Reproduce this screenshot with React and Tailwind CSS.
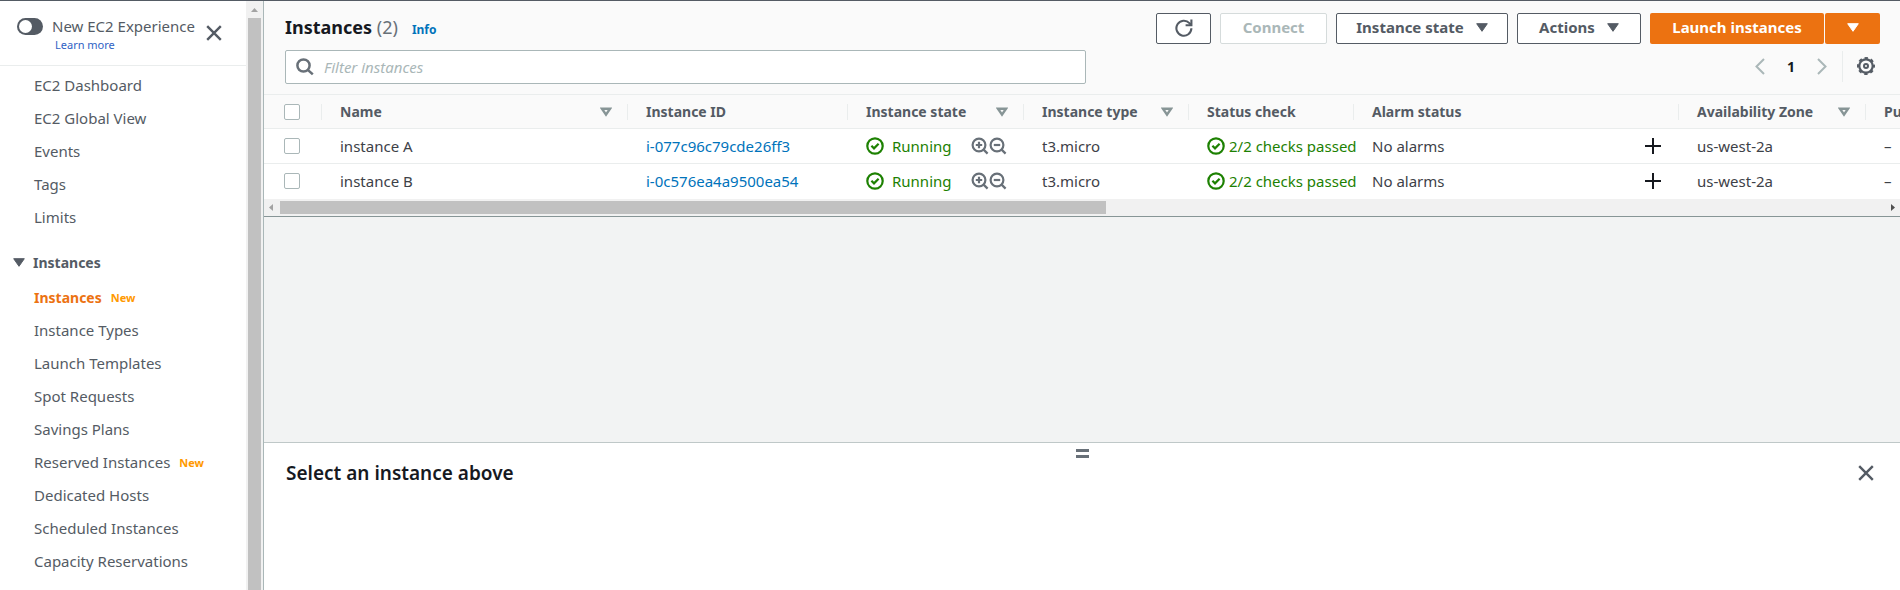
import React, { useState } from 'react';

const overviewLinks = ['EC2 Dashboard', 'EC2 Global View', 'Events', 'Tags', 'Limits'];

const instanceLinks = [
  { label: 'Instances', isNew: true, active: true },
  { label: 'Instance Types' },
  { label: 'Launch Templates' },
  { label: 'Spot Requests' },
  { label: 'Savings Plans' },
  { label: 'Reserved Instances', isNew: true },
  { label: 'Dedicated Hosts' },
  { label: 'Scheduled Instances' },
  { label: 'Capacity Reservations' },
];

const columns = [
  { label: 'Name', sortable: true, width: 'w-[306px]' },
  { label: 'Instance ID', width: 'w-[220px]' },
  { label: 'Instance state', sortable: true, width: 'w-[176px]' },
  { label: 'Instance type', sortable: true, width: 'w-[165px]' },
  { label: 'Status check', width: 'w-[165px]' },
  { label: 'Alarm status', width: 'w-[325px]' },
  { label: 'Availability Zone', sortable: true, width: 'w-[187px]' },
  { label: 'Public IPv4 DNS', width: 'w-[240px]' },
];

const instances = [
  { name: 'instance A', id: 'i-077c96c79cde26ff3' },
  { name: 'instance B', id: 'i-0c576ea4a9500ea54' },
];

function CloseIcon({ className }) {
  return (
    <svg viewBox="0 0 16 16" className={className} fill="none" stroke="currentColor" strokeWidth="2.4" aria-hidden="true">
      <path d="M1.2 1.2l13.6 13.6M14.8 1.2L1.2 14.8" />
    </svg>
  );
}

function Caret() {
  return (
    <svg viewBox="0 0 12 9" className="h-[9px] w-[12px] shrink-0" fill="currentColor" stroke="currentColor" strokeLinejoin="round" aria-hidden="true">
      <path d="M.7.7h10.6L6 8.3z" />
    </svg>
  );
}

function SortIcon() {
  return (
    <svg viewBox="0 0 12 10" className="h-[10px] w-[12px] shrink-0 text-[#879596]" fill="none" stroke="currentColor" strokeWidth="2.4" aria-hidden="true">
      <path d="M2 1.7h8L6 7.6z" />
    </svg>
  );
}

function SearchIcon() {
  return (
    <svg viewBox="0 0 18 18" className="h-[18px] w-[18px] shrink-0 text-[#687078]" fill="none" stroke="currentColor" strokeWidth="2.5" aria-hidden="true">
      <circle cx="7.5" cy="7.5" r="6.1" />
      <path d="M11.8 11.8l5 4.6" />
    </svg>
  );
}

function ZoomIcon({ plus }) {
  return (
    <svg viewBox="0 0 18 18" className="h-[18px] w-[18px]" fill="none" stroke="currentColor" strokeWidth="2.2" aria-hidden="true">
      <circle cx="8" cy="8" r="6.4" />
      <path d="M12.6 12.6l4 4" />
      <path d={plus ? 'M4.8 8h6.4M8 4.8v6.4' : 'M4.8 8h6.4'} />
    </svg>
  );
}

function CheckCircle() {
  return (
    <svg viewBox="0 0 18 18" className="h-[18px] w-[18px] shrink-0" fill="none" stroke="currentColor" strokeWidth="2.2" aria-hidden="true">
      <circle cx="9" cy="9" r="7.7" />
      <path d="M5.4 8.8l2.6 2.6 4.6-4.6" />
    </svg>
  );
}

function RefreshIcon() {
  return (
    <svg viewBox="0 0 18 18" className="h-[18px] w-[18px]" fill="none" stroke="currentColor" strokeWidth="2.1" aria-hidden="true">
      <path d="M16.4 9.3a7.5 7.5 0 1 1-2-5.2l1.6 1.7" />
      <path d="M16.4.6v5.6h-5.8" />
    </svg>
  );
}

function GearIcon() {
  return (
    <svg viewBox="0 0 18 18" className="h-[18px] w-[18px]" fill="none" stroke="currentColor" strokeLinejoin="round" aria-hidden="true">
      <circle cx="9" cy="9" r="6.7" strokeWidth="2.2" />
      <circle cx="9" cy="9" r="8" strokeWidth="2" strokeDasharray="3.4 2.883" strokeDashoffset="1.7" />
      <circle cx="9" cy="9" r="2" strokeWidth="2" />
    </svg>
  );
}

function Chevron({ right }) {
  return (
    <svg viewBox="0 0 10 17" className="h-[17px] w-[10px]" fill="none" stroke="currentColor" strokeWidth="2" aria-hidden="true">
      <path d={right ? 'M1 1l7.5 7.5L1 16' : 'M9 1L1.5 8.5 9 16'} />
    </svg>
  );
}

function Checkbox({ label }) {
  return (
    <input
      type="checkbox"
      aria-label={label}
      className="block h-4 w-4 appearance-none rounded-xs border border-[#aab7b8] bg-white checked:bg-[#0073bb]"
    />
  );
}

function NavLink({ label, isNew, active }) {
  return (
    <li className="flex h-[33px] items-center gap-[9px] pl-[34px]">
      <a href="#" className={active ? 'text-[14px] font-bold text-[#ec7211]' : 'text-[#545b64]'}>{label}</a>
      {isNew && <span className="pt-[2px] text-[11px] font-bold text-[#ff9900]">New</span>}
    </li>
  );
}

function Sidebar() {
  return (
    <aside className="flex shrink-0 overflow-hidden">
      <div className="w-[246px]">
        <div className="flex h-[65px] border-b border-[#eaeded] pl-[17px]">
          <button type="button" role="switch" aria-checked="false" aria-label="New EC2 Experience" className="mt-[17px] flex h-[17px] w-[26px] rounded-full bg-[#545b64] p-[2px]">
            <span className="h-[13px] w-[13px] rounded-full bg-white" />
          </button>
          <div className="ml-[9px] w-[150px] pt-[15px] whitespace-nowrap">
            <div className="leading-5 text-[#545b64]">New EC2 Experience</div>
            <a href="#" className="block pl-[3px] text-[11px] leading-[18px] text-[#2f62c4]">Learn more</a>
          </div>
          <button type="button" aria-label="Close navigation" className="ml-1 pb-px text-[#545b64]">
            <CloseIcon className="h-4 w-4" />
          </button>
        </div>
        <nav aria-label="EC2" className="pt-[3px]">
          <ul>
            {overviewLinks.map((label) => <NavLink key={label} label={label} />)}
          </ul>
          <button type="button" className="mt-3 flex h-[33px] items-center gap-2 pl-[13px] text-[14px] font-bold text-[#545b64]">
            <Caret />
            Instances
          </button>
          <ul className="pt-[2px]">
            {instanceLinks.map((item) => <NavLink key={item.label} {...item} />)}
          </ul>
        </nav>
      </div>
      <div className="flex w-[17px] flex-col bg-[#f1f1f1]" aria-hidden="true">
        <div className="flex h-[17px] shrink-0 items-center justify-center">
          <svg viewBox="0 0 7 4" className="h-1 w-[7px]" fill="#a3a3a3"><path d="M0 4L3.5 0 7 4z" /></svg>
        </div>
        <div className="mx-[2px] flex-1 bg-[#c1c1c1]" />
      </div>
    </aside>
  );
}

const buttonBase = 'flex h-[31px] items-center justify-center rounded-[2px] pb-[2px] font-bold whitespace-nowrap';
const outlined = 'border border-[#545b64] bg-white text-[#545b64]';

function Toolbar() {
  const [filter, setFilter] = useState('');
  return (
    <header className="bg-[#fafafa] pr-5 pl-[21px]">
      <div className="flex items-start justify-between pt-3">
        <div className="flex items-baseline">
          <h1 className="text-[18px] leading-7 font-bold text-[#16191f]">
            Instances <span className="font-normal text-[#687078]">(2)</span>
          </h1>
          <a href="#" className="ml-[14px] text-[12px] font-bold text-[#0073bb]">Info</a>
        </div>
        <div className="flex gap-[9px]">
          <button type="button" aria-label="Refresh" className={`${buttonBase} ${outlined} w-[55px]`}><RefreshIcon /></button>
          <button type="button" disabled className={`${buttonBase} w-[107px] border border-[#d5dbdb] bg-white text-[#aab7b8]`}>Connect</button>
          <button type="button" className={`${buttonBase} ${outlined} w-[172px] gap-3`}>Instance state <Caret /></button>
          <button type="button" className={`${buttonBase} ${outlined} w-[124px] gap-3`}>Actions <Caret /></button>
          <div className="flex gap-px">
            <button type="button" className={`${buttonBase} w-[174px] bg-[#ec7211] text-white`}>Launch instances</button>
            <button type="button" aria-label="More launch options" className={`${buttonBase} w-[55px] bg-[#ec7211] text-white`}><Caret /></button>
          </div>
        </div>
      </div>
      <div className="flex items-start justify-between pt-[6px] pb-[10px]">
        <label className="flex h-[34px] w-[801px] items-center gap-[10px] rounded-[2px] border border-[#aab7b8] bg-white pl-[10px]">
          <SearchIcon />
          <input
            type="text"
            aria-label="Filter instances"
            placeholder="Filter instances"
            value={filter}
            onChange={(event) => setFilter(event.target.value)}
            className="min-w-0 flex-1 outline-none placeholder:text-[#aab7b8] placeholder:italic"
          />
        </label>
        <div className="flex h-8 items-center">
          <button type="button" aria-label="Previous page" className="text-[#aab7b8]"><Chevron /></button>
          <button type="button" aria-current="page" className="w-[52px] text-center text-[14px] font-bold text-[#16191f]">1</button>
          <button type="button" aria-label="Next page" className="text-[#aab7b8]"><Chevron right /></button>
          <span className="mr-[14px] ml-[15px] h-[31px] w-px bg-[#eaeded]" />
          <button type="button" aria-label="Preferences" className="mr-[5px] text-[#545b64]"><GearIcon /></button>
        </div>
      </div>
    </header>
  );
}

function InstanceTable() {
  return (
    <div className="overflow-hidden">
      <table className="w-[1842px] table-fixed border-collapse bg-white text-left text-[#3d4148]">
        <thead>
          <tr className="h-[34px] border-y border-[#eaeded] bg-[#fafafa] text-[14px] text-[#545b64]">
            <th className="w-[58px] p-0">
              <div className="flex h-4 items-center border-r border-[#eaeded] pl-5"><Checkbox label="Select all instances" /></div>
            </th>
            {columns.map((column) => (
              <th key={column.label} scope="col" className={`${column.width} p-0 font-bold whitespace-nowrap`}>
                <div className="flex h-4 items-center justify-between border-r border-[#eaeded] pr-[15px] pl-[18px]">
                  {column.label}
                  {column.sortable && <SortIcon />}
                </div>
              </th>
            ))}
          </tr>
        </thead>
        <tbody>
          {instances.map((instance) => (
            <tr key={instance.id} className="h-[35px] border-b border-[#eaeded] whitespace-nowrap last:border-b-0">
              <td className="p-0 pl-5"><Checkbox label={`Select ${instance.name}`} /></td>
              <td className="p-0 pl-[18px]">{instance.name}</td>
              <td className="p-0 pl-[18px]"><a href="#" className="text-[#0073bb]">{instance.id}</a></td>
              <td className="p-0 pl-[18px]">
                <div className="flex items-center justify-between pr-[17px]">
                  <span className="flex items-center gap-2 text-[#1d8102]"><CheckCircle />Running</span>
                  <span className="flex text-[#687078]">
                    <button type="button" aria-label="Include Running in filter"><ZoomIcon plus /></button>
                    <button type="button" aria-label="Exclude Running from filter"><ZoomIcon /></button>
                  </span>
                </div>
              </td>
              <td className="p-0 pl-[18px]">t3.micro</td>
              <td className="p-0 pl-[18px]">
                <span className="flex items-center gap-1 text-[#1d8102]"><CheckCircle />2/2 checks passed</span>
              </td>
              <td className="p-0 pl-[18px]">
                <div className="flex items-center justify-between pr-[18px]">
                  No alarms
                  <button type="button" aria-label={`Add alarm for ${instance.name}`} className="text-[#16191f]">
                    <svg viewBox="0 0 16 16" className="h-4 w-4" stroke="currentColor" strokeWidth="2" aria-hidden="true"><path d="M8 0v16M0 8h16" /></svg>
                  </button>
                </div>
              </td>
              <td className="p-0 pl-[18px]">us-west-2a</td>
              <td className="p-0 pl-[18px]">–</td>
            </tr>
          ))}
        </tbody>
      </table>
    </div>
  );
}

export default function App() {
  return (
    <div className="flex h-screen overflow-hidden border-t border-[#545b64] bg-white font-['Noto_Sans','Open_Sans',sans-serif] text-[15px]">
      <Sidebar />
      <main className="flex min-w-0 flex-1 flex-col border-l border-[#aab7b8] bg-[#f2f3f3]">
        <section aria-label="Instances">
          <Toolbar />
          <InstanceTable />
          <div className="flex h-[18px] items-center justify-between border-b border-[#879596] bg-[#f1f1f1] px-[5px]" aria-hidden="true">
            <svg viewBox="0 0 4 7" className="h-[7px] w-1" fill="#a3a3a3"><path d="M4 0L0 3.5 4 7z" /></svg>
            <div className="mx-[7px] flex-1">
              <div className="h-[13px] w-[51.5%] bg-[#c1c1c1]" />
            </div>
            <svg viewBox="0 0 4 7" className="h-[7px] w-1" fill="#505050"><path d="M0 0l4 3.5L0 7z" /></svg>
          </div>
        </section>
        <section aria-label="Instance details" className="mt-auto min-h-[148px] border-t border-[#bfc8c8] bg-white">
          <div className="flex justify-center pt-[6px]">
            <button type="button" aria-label="Resize panel" className="flex h-[9px] w-[13px] flex-col justify-between">
              <span className="h-[3px] w-full bg-[#687078]" />
              <span className="h-[3px] w-full bg-[#687078]" />
            </button>
          </div>
          <div className="flex items-center justify-between pr-[26px] pl-[22px]">
            <h2 className="text-[19px] leading-[30px] font-semibold text-[#16191f]">Select an instance above</h2>
            <button type="button" aria-label="Close panel" className="text-[#545b64]"><CloseIcon className="h-4 w-4" /></button>
          </div>
        </section>
      </main>
    </div>
  );
}
